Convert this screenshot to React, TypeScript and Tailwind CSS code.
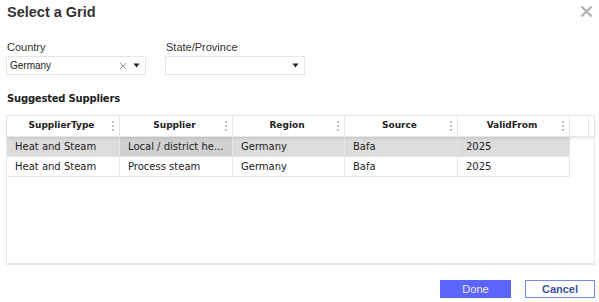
import React from "react";

const COLUMNS = ["SupplierType", "Supplier", "Region", "Source", "ValidFrom"];
const WIDTHS = ["w-[113px]", "w-[113px]", "w-[112px]", "w-[113px]", "w-[112px]"];

const ROWS = [
  ["Heat and Steam", "Local / district he...", "Germany", "Bafa", "2025"],
  ["Heat and Steam", "Process steam", "Germany", "Bafa", "2025"],
];

const Caret = () => (
  <svg width="7" height="5" viewBox="0 0 7 5" className="shrink-0">
    <path d="M0.5 0.5 L6.5 0.5 L3.5 4.5 Z" fill="#222" />
  </svg>
);

const Dots = () => (
  <span className="flex flex-col gap-[2px] mr-[5px]">
    <span className="w-[2px] h-[2px] bg-[#aaa] rounded-full" />
    <span className="w-[2px] h-[2px] bg-[#aaa] rounded-full" />
    <span className="w-[2px] h-[2px] bg-[#aaa] rounded-full" />
  </span>
);

export default function App() {
  return (
    <div className="w-[599px] h-[302px] bg-white text-[#333] font-['Liberation_Sans',Arial,sans-serif] relative overflow-hidden">
      {/* Title */}
      <div className="flex items-start justify-between pl-[7px] pr-[7px] pt-[2px]">
        <h1 className="text-[14.5px] font-bold leading-[20px] text-[#333]">Select a Grid</h1>
        <svg width="13" height="13" viewBox="0 0 13 13" className="mt-[3px] mr-[-1px]">
          <path d="M1.5 1.5 L11.5 11.5 M11.5 1.5 L1.5 11.5" stroke="#b0b0b0" strokeWidth="2.2" />
        </svg>
      </div>

      {/* Filters */}
      <div className="flex gap-[19px] pl-[6px] mt-[19px]">
        <div className="flex flex-col">
          <label className="text-[11px] leading-[13px] text-[#333] pl-[1px] mb-[2px]">Country</label>
          <div className="w-[140px] h-[19px] border border-[#e6e6e6] flex items-center pl-[3px] pr-[5px]">
            <span className="text-[10px] text-[#222] flex-1">Germany</span>
            <svg width="8" height="8" viewBox="0 0 8 8" className="mr-[6px]">
              <path d="M1 1 L7 7 M7 1 L1 7" stroke="#999" strokeWidth="1" />
            </svg>
            <Caret />
          </div>
        </div>
        <div className="flex flex-col">
          <label className="text-[11px] leading-[13px] text-[#333] pl-[1px] mb-[2px]">State/Province</label>
          <div className="w-[140px] h-[19px] border border-[#e6e6e6] flex items-center justify-end pr-[5px]">
            <Caret />
          </div>
        </div>
      </div>

      <div className="pl-[7px] mt-[18px] text-[10px] font-bold leading-[12px] text-[#222] font-['DejaVu_Sans',sans-serif] tracking-[-0.2px]">
        Suggested Suppliers
      </div>

      {/* Grid */}
      <div className="ml-[6px] mt-[10px] w-[589px] h-[150px] border border-[#e8e8e8] border-b-[2px] font-['DejaVu_Sans',sans-serif]">
        <div className="flex h-[21px] border-b border-[#e6e6e6] shadow-[0_2px_3px_rgba(0,0,0,0.08)] relative">
          {COLUMNS.map((c, i) => (
            <div key={c} className={`${WIDTHS[i]} flex items-center border-r border-[#e6e6e6]`}>
              <span className="flex-1 text-center text-[9px] font-bold text-[#222] pl-[4px]">{c}</span>
              <Dots />
            </div>
          ))}
          <div className="w-[19px] border-r border-[#e6e6e6]" />
        </div>
        {ROWS.map((r, ri) => (
          <div key={ri} className={`flex h-[20px] w-[563px] border-b border-[#e6e6e6] ${ri === 0 ? "bg-[#dcdcdc]" : ""}`}>
            {r.map((v, ci) => (
              <div
                key={ci}
                className={`${WIDTHS[ci]} flex items-center pl-[8px] border-r border-[#e6e6e6] text-[10px] text-[#222] whitespace-nowrap overflow-hidden ${
                  ri === 0 && ci === 1 ? "bg-[#d1d1d1]" : ""
                } ${ri === 0 ? "border-[#d0d0d0]" : ""}`}
              >
                {v}
              </div>
            ))}
          </div>
        ))}
      </div>

      {/* Buttons */}
      <div className="flex justify-end gap-[14px] pr-[4px] mt-[15px]">
        <button className="w-[71px] h-[18px] bg-[#5c66ff] text-[#e8eaff] text-[11px] leading-[18px] text-center">
          Done
        </button>
        <button className="w-[70px] h-[18px] bg-white border border-[#6c8cf0] text-[#3a4fa6] text-[11px] font-bold leading-[16px] text-center">
          Cancel
        </button>
      </div>
    </div>
  );
}
